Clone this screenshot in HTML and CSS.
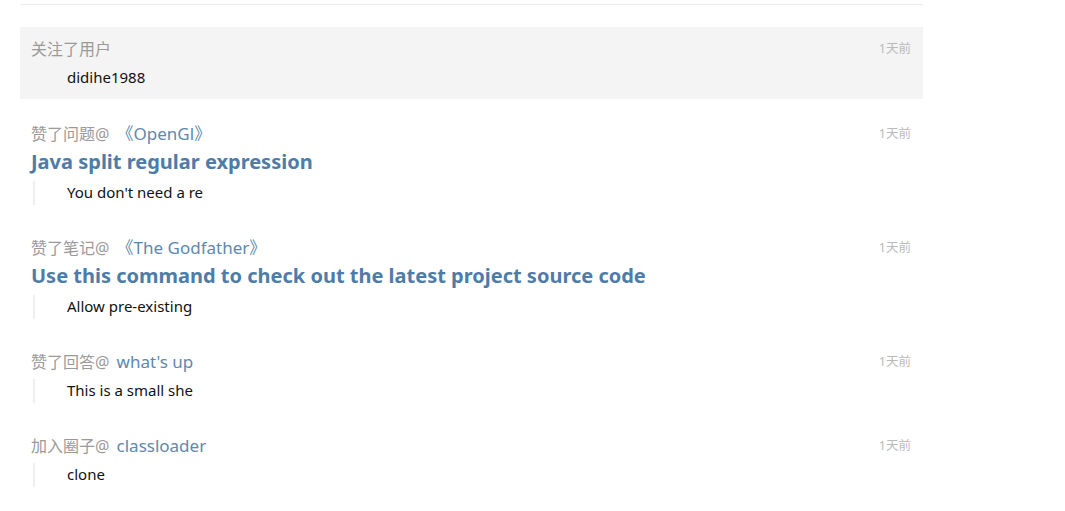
FILE: index.html
```html
<!DOCTYPE html>
<html lang="zh-CN">
<head>
<meta charset="utf-8">
<title>动态</title>
<link rel="stylesheet" href="styles.css">
</head>
<body>
<ul class="feed">
  <li class="item item-active">
    <div class="item-head">
      <span class="action">关注了用户</span>
      <span class="time">1天前</span>
    </div>
    <div class="quote quote-plain">didihe1988</div>
  </li>
  <li class="item">
    <div class="item-head">
      <span class="action">赞了问题@ <a class="ref" href="#">《OpenGl》</a></span>
      <span class="time">1天前</span>
    </div>
    <a class="headline" href="#">Java split regular expression</a>
    <div class="quote">You don't need a re</div>
  </li>
  <li class="item">
    <div class="item-head">
      <span class="action">赞了笔记@ <a class="ref" href="#">《The Godfather》</a></span>
      <span class="time">1天前</span>
    </div>
    <a class="headline" href="#">Use this command to check out the latest project source code</a>
    <div class="quote">Allow pre-existing</div>
  </li>
  <li class="item">
    <div class="item-head">
      <span class="action">赞了回答@ <a class="ref" href="#">what's up</a></span>
      <span class="time">1天前</span>
    </div>
    <div class="quote">This is a small she</div>
  </li>
  <li class="item">
    <div class="item-head">
      <span class="action">加入圈子@ <a class="ref" href="#">classloader</a></span>
      <span class="time">1天前</span>
    </div>
    <div class="quote">clone</div>
  </li>
</ul>
</body>
</html>
```

FILE: styles.css
```css
html, body {
  margin: 0;
  padding: 0;
  background: #ffffff;
}

body {
  font-family: "Noto Sans", "Noto Sans CJK SC", sans-serif;
  color: #111;
  padding: 4px 0 0 20px;
}

.feed {
  list-style: none;
  margin: 0;
  padding: 22px 0 0 0;
  width: 903px;
  border-top: 1px solid #ebebeb;
}

.item {
  display: flex;
  flex-direction: column;
  padding: 11px 12px 9px 11px;
  margin-bottom: 12px;
}

.item-active {
  background: #f4f4f4;
  margin-bottom: 13px;
}

.item-head {
  display: flex;
  justify-content: space-between;
  align-items: center;
  height: 22px;
  margin-bottom: 6px;
}

.action {
  font-size: 16px;
  line-height: 22px;
  color: #9a9a9a;
  white-space: nowrap;
}

.ref {
  font-size: 17px;
  margin-left: 3px;
  color: #6088ae;
  text-decoration: none;
}

.time {
  font-size: 12.5px;
  color: #bababa;
  line-height: 22px;
}

.headline {
  display: block;
  font-size: 20px;
  font-weight: bold;
  line-height: 30px;
  margin-top: -4px;
  margin-bottom: 4px;
  color: #4e7ca8;
  text-decoration: none;
}

.quote {
  margin-left: 2px;
  border-left: 2px solid #efefef;
  padding: 1px 0 3px 32px;
  font-size: 15px;
  line-height: 20px;
  color: #111;
}

.quote-plain {
  border-left-color: transparent;
}
```
